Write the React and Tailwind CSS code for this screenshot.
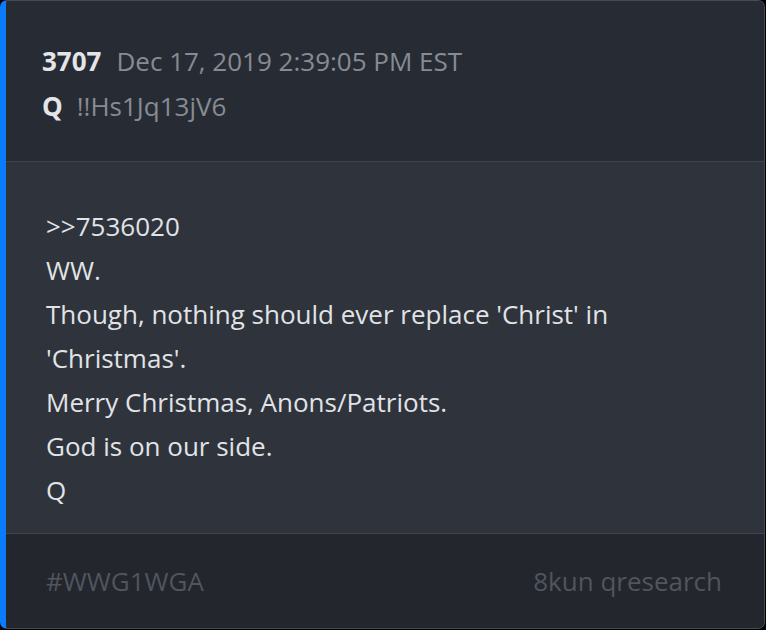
export default function App() {
  const lines = [
    '>>7536020',
    'WW.',
    "Though, nothing should ever replace 'Christ' in",
    "'Christmas'.",
    'Merry Christmas, Anons/Patriots.',
    'God is on our side.',
    'Q',
  ];

  return (
    <div className="w-[766px] h-[630px] bg-black" style={{ fontFamily: '"Open Sans", sans-serif' }}>
      <div className="w-[765px] h-[629px] flex flex-col overflow-hidden rounded-[7px] border border-[#454a53] border-l-[6px] border-l-[#0a7bfb] bg-[#2e333c]">
        {/* Header */}
        <div className="h-[161px] shrink-0 bg-[#272b33] pl-[36px] pt-[38px] border-b border-[#3e434c]">
          <div className="flex items-baseline h-[45px] leading-[45px]">
            <span className="text-[26px] font-bold text-[#e4e5e7]">3707</span>
            <span className="ml-[15px] text-[26px] text-[#878b94]">Dec 17, 2019 2:39:05 PM EST</span>
          </div>
          <div className="flex items-baseline h-[45px] leading-[45px]">
            <span className="text-[26px] font-bold text-[#e4e5e7]">Q</span>
            <span className="ml-[14px] text-[26px] text-[#878b94]">!!Hs1Jq13jV6</span>
          </div>
        </div>

        {/* Body */}
        <div className="h-[372px] shrink-0 pl-[40px] pt-[42px] border-b border-[#41464f]">
          {lines.map((line, i) => (
            <div key={i} className="text-[26px] leading-[44px] text-[#e1e3e6]">
              {line}
            </div>
          ))}
        </div>

        {/* Footer */}
        <div className="flex-1 bg-[#23262d] flex items-center justify-between pl-[40px] pr-[42px]">
          <span className="text-[26px] text-[#50555e]">#WWG1WGA</span>
          <span className="text-[26px] text-[#50555e]">8kun qresearch</span>
        </div>
      </div>
    </div>
  );
}
